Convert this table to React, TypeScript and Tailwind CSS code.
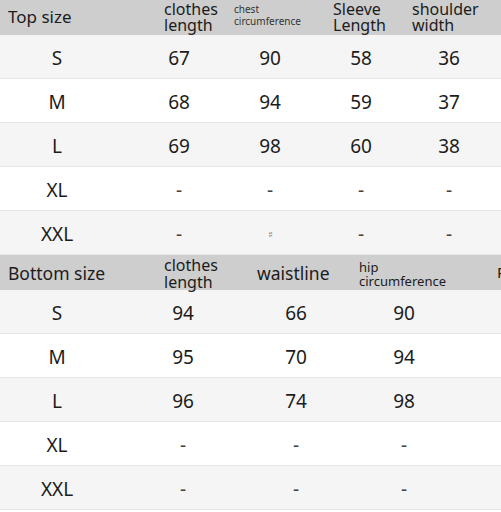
import React from 'react'

type Row = { size: string; values: string[] }

const topRows: Row[] = [
    { size: 'S', values: ['67', '90', '58', '36'] },
    { size: 'M', values: ['68', '94', '59', '37'] },
    { size: 'L', values: ['69', '98', '60', '38'] },
    { size: 'XL', values: ['-', '-', '-', '-'] },
    { size: 'XXL', values: ['-', '', '-', '-'] },
]

const bottomRows: Row[] = [
    { size: 'S', values: ['94', '66', '90'] },
    { size: 'M', values: ['95', '70', '94'] },
    { size: 'L', values: ['96', '74', '98'] },
    { size: 'XL', values: ['-', '-', '-'] },
    { size: 'XXL', values: ['-', '-', '-'] },
]

// cell widths chosen so each value sits centred under its column
const topWidths = ['w-[114px]', 'w-[130px]', 'w-[52px]', 'w-[130px]', 'w-[46px]']
const bottomWidths = ['w-[114px]', 'w-[138px]', 'w-[88px]', 'w-[128px]']

function DataRow({ row, index, widths }: { row: Row; index: number; widths: string[] }) {
    const bg = index % 2 === 0 ? 'bg-[#f5f5f5]' : 'bg-white'
    return (
        <div className={`flex h-11 items-center border-b border-[#e6e6e6] pt-[3px] ${bg}`}>
            <div className={`${widths[0]} flex justify-center`}>{row.size}</div>
            {row.values.map((v, i) => (
                <div key={i} className={`${widths[i + 1]} flex justify-center ${v === '-' ? 'text-[#444]' : ''}`}>
                    {v === '' ? (
                        <span className="text-[5px] leading-[5px] text-[#555] [writing-mode:vertical-rl]">ss</span>
                    ) : (
                        v
                    )}
                </div>
            ))}
        </div>
    )
}

export default function App() {
    return (
        <div
            className="w-[501px] h-[512px] overflow-hidden bg-white text-[#1c1c1c] text-[19px]"
            style={{ fontFamily: '"Noto Sans", "Open Sans", sans-serif' }}
        >
            {/* top size header */}
            <div className="flex h-[35px] items-center bg-[#cecece] pl-2 text-[16px] leading-[16.5px]">
                <div className="w-[156px] text-[17px] pb-px">Top size</div>
                <div className="w-[70px] pb-px">
                    clothes
                    <br />
                    length
                </div>
                <div className="w-[99px] self-start pt-[4px] text-[10px] leading-[11.5px] text-[#333]">
                    chest
                    <br />
                    circumference
                </div>
                <div className="w-[79px] pb-px">
                    Sleeve
                    <br />
                    Length
                </div>
                <div className="pb-px">
                    shoulder
                    <br />
                    width
                </div>
            </div>
            {topRows.map((r, i) => (
                <DataRow key={r.size} row={r} index={i} widths={topWidths} />
            ))}

            {/* bottom size header */}
            <div className="flex h-[35px] items-center bg-[#cecece] pl-2 text-[17.5px]">
                <div className="w-[156px] pt-[2px]">Bottom size</div>
                <div className="w-[93px] text-[16px] leading-[16.5px] pt-[2px]">
                    clothes
                    <br />
                    length
                </div>
                <div className="w-[102px] pt-px">waistline</div>
                <div className="w-[138px] text-[13px] leading-[14px] pt-[3px]">
                    hip
                    <br />
                    circumference
                </div>
                <div className="overflow-hidden w-[4px] text-[15px]">R</div>
            </div>
            {bottomRows.map((r, i) => (
                <DataRow key={r.size} row={r} index={i} widths={bottomWidths} />
            ))}
        </div>
    )
}
